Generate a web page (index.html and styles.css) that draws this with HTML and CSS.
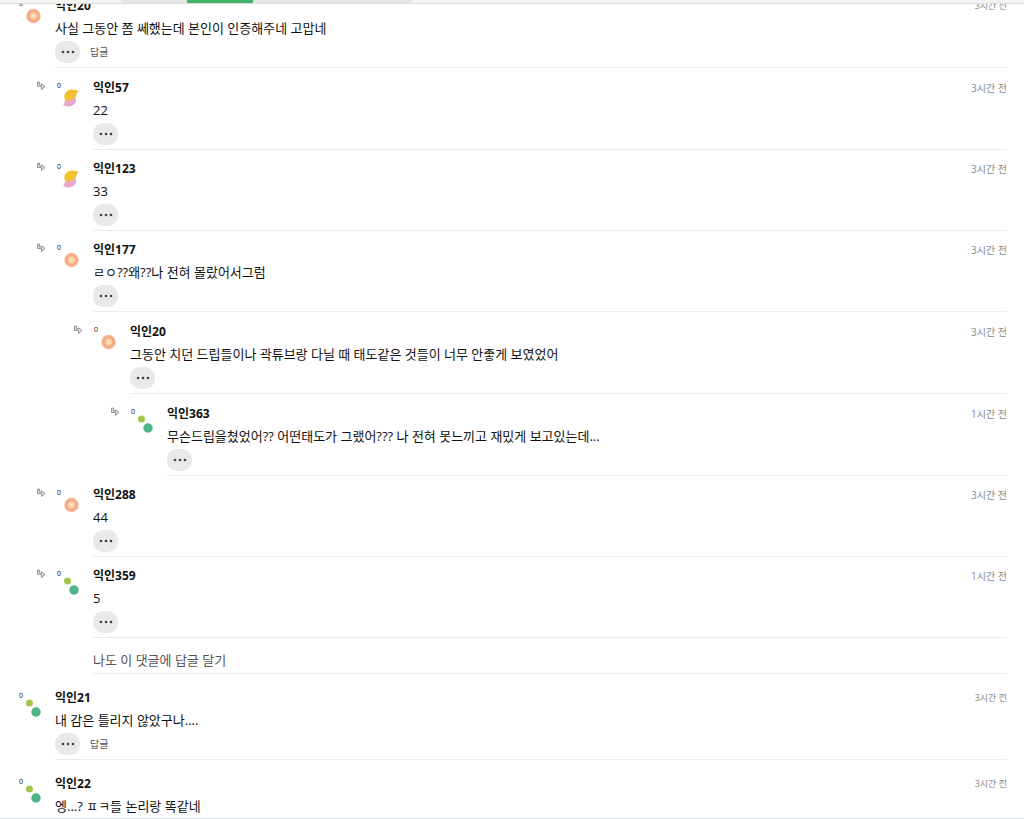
FILE: index.html
```
<!DOCTYPE html>
<html lang="ko">
<head>
    <meta charset="UTF-8">
    <meta name="viewport" content="width=device-width, initial-scale=1.0">
    <title>댓글</title>
    <link rel="stylesheet" href="styles.css">
</head>
<body>

    <!-- Shared icons -->
    <svg class="sprite" aria-hidden="true">
        <defs>
            <radialGradient id="ringFill">
                <stop offset="0" stop-color="#fde3bd"/>
                <stop offset="0.4" stop-color="#fbd0a8"/>
                <stop offset="0.65" stop-color="#f3a47c"/>
                <stop offset="1" stop-color="#f8bc9a"/>
            </radialGradient>
        </defs>
        <symbol id="ring" viewBox="0 0 20 24">
            <circle cx="12.500" cy="13" r="7.200" fill="url(#ringFill)"/>
        </symbol>
        <symbol id="swirl" viewBox="0 0 20 24">
            <path d="M4 19.500C6.500 18 6 11.500 12 11.500C16 11.500 18.500 14 16.500 17.500C14 22 7.500 22.500 4 19.500Z" fill="#eba6cc"/>
            <path d="M5.500 13C4.500 7.500 9 4.500 13 4.500C15.500 4.300 17 5.500 19.500 5.500C18.500 7.500 17.500 8.500 17 11C16 15 12 13.500 9.500 15.500C7.500 16.500 6 15.500 5.500 13Z" fill="#f3c02f"/>
        </symbol>
        <symbol id="dots" viewBox="0 0 20 24">
            <circle cx="8.500" cy="8" r="3.500" fill="#a3c64d"/>
            <circle cx="15" cy="17" r="4.700" fill="#4db583"/>
        </symbol>
        <symbol id="arrow" viewBox="0 0 10 10">
            <path d="M1.500 1V5.500H5.500V8.500L9 5.500L5.500 2.800V4H3.500V1Z" fill="#ddd" stroke="#8c8c8c" stroke-width="0.900"/>
        </symbol>
        <symbol id="more" viewBox="0 0 16 4">
            <circle cx="3" cy="2" r="1.300"/>
            <circle cx="8" cy="2" r="1.300"/>
            <circle cx="13" cy="2" r="1.300"/>
        </symbol>
    </svg>

    <!-- Tab bar -->
    <header class="tabs">
        <span class="tab"></span>
        <span class="tab active"></span>
        <span class="tab wide"></span>
    </header>

    <main class="board">
        <ul class="comments">
            <li>
                <article class="comment top">
                    <div class="avatar"><span>0</span><svg><use href="#ring"/></svg></div>
                    <div class="content">
                        <div class="head"><b>익인20</b><time>3시간 전</time></div>
                        <p>사실 그동안 쫌 쎄했는데 본인이 인증해주네 고맙네</p>
                        <div class="actions">
                            <button class="more" aria-label="더보기"><svg><use href="#more"/></svg></button>
                            <a href="#">답글</a>
                        </div>
                    </div>
                </article>
                <ul class="replies">
                    <li>
                        <article class="comment">
                            <svg class="arrow"><use href="#arrow"/></svg>
                            <div class="avatar"><span>0</span><svg><use href="#swirl"/></svg></div>
                            <div class="content">
                                <div class="head"><b>익인57</b><time>3시간 전</time></div>
                                <p>22</p>
                                <div class="actions"><button class="more" aria-label="더보기"><svg><use href="#more"/></svg></button></div>
                            </div>
                        </article>
                    </li>
                    <li>
                        <article class="comment">
                            <svg class="arrow"><use href="#arrow"/></svg>
                            <div class="avatar"><span>0</span><svg><use href="#swirl"/></svg></div>
                            <div class="content">
                                <div class="head"><b>익인123</b><time>3시간 전</time></div>
                                <p>33</p>
                                <div class="actions"><button class="more" aria-label="더보기"><svg><use href="#more"/></svg></button></div>
                            </div>
                        </article>
                    </li>
                    <li>
                        <article class="comment">
                            <svg class="arrow"><use href="#arrow"/></svg>
                            <div class="avatar"><span>0</span><svg><use href="#ring"/></svg></div>
                            <div class="content">
                                <div class="head"><b>익인177</b><time>3시간 전</time></div>
                                <p>ㄹㅇ??왜??나 전혀 몰랐어서그럼</p>
                                <div class="actions"><button class="more" aria-label="더보기"><svg><use href="#more"/></svg></button></div>
                            </div>
                        </article>
                        <ul class="replies">
                            <li>
                                <article class="comment">
                                    <svg class="arrow"><use href="#arrow"/></svg>
                                    <div class="avatar"><span>0</span><svg><use href="#ring"/></svg></div>
                                    <div class="content">
                                        <div class="head"><b>익인20</b><time>3시간 전</time></div>
                                        <p>그동안 치던 드립들이나 곽튜브랑 다닐 때 태도같은 것들이 너무 안좋게 보였었어</p>
                                        <div class="actions"><button class="more" aria-label="더보기"><svg><use href="#more"/></svg></button></div>
                                    </div>
                                </article>
                                <ul class="replies">
                                    <li>
                                        <article class="comment">
                                            <svg class="arrow"><use href="#arrow"/></svg>
                                            <div class="avatar"><span>0</span><svg><use href="#dots"/></svg></div>
                                            <div class="content">
                                                <div class="head"><b>익인363</b><time>1시간 전</time></div>
                                                <p>무슨드립을쳤었어?? 어떤태도가 그랬어??? 나 전혀 못느끼고 재밌게 보고있는데...</p>
                                                <div class="actions"><button class="more" aria-label="더보기"><svg><use href="#more"/></svg></button></div>
                                            </div>
                                        </article>
                                    </li>
                                </ul>
                            </li>
                        </ul>
                    </li>
                    <li>
                        <article class="comment">
                            <svg class="arrow"><use href="#arrow"/></svg>
                            <div class="avatar"><span>0</span><svg><use href="#ring"/></svg></div>
                            <div class="content">
                                <div class="head"><b>익인288</b><time>3시간 전</time></div>
                                <p>44</p>
                                <div class="actions"><button class="more" aria-label="더보기"><svg><use href="#more"/></svg></button></div>
                            </div>
                        </article>
                    </li>
                    <li>
                        <article class="comment">
                            <svg class="arrow"><use href="#arrow"/></svg>
                            <div class="avatar"><span>0</span><svg><use href="#dots"/></svg></div>
                            <div class="content">
                                <div class="head"><b>익인359</b><time>1시간 전</time></div>
                                <p>5</p>
                                <div class="actions"><button class="more" aria-label="더보기"><svg><use href="#more"/></svg></button></div>
                            </div>
                        </article>
                    </li>
                    <li class="write"><a href="#">나도 이 댓글에 답글 달기</a></li>
                </ul>
            </li>
            <li>
                <article class="comment top">
                    <div class="avatar"><span>0</span><svg><use href="#dots"/></svg></div>
                    <div class="content">
                        <div class="head"><b>익인21</b><time>3시간 전</time></div>
                        <p>내 감은 틀리지 않았구나....</p>
                        <div class="actions">
                            <button class="more" aria-label="더보기"><svg><use href="#more"/></svg></button>
                            <a href="#">답글</a>
                        </div>
                    </div>
                </article>
            </li>
            <li>
                <article class="comment top">
                    <div class="avatar"><span>0</span><svg><use href="#dots"/></svg></div>
                    <div class="content">
                        <div class="head"><b>익인22</b><time>3시간 전</time></div>
                        <p>엥...? ㅍㅋ들 논리랑 똑같네</p>
                    </div>
                </article>
            </li>
        </ul>
    </main>

</body>
</html>
```
FILE: styles.css
```
* {
    margin: 0;
    padding: 0;
    box-sizing: border-box;
}
body {
    display: flex;
    flex-direction: column;
    height: 100vh;
    overflow: hidden;
    background: #fff;
    color: #111;
    font-family: "Open Sans", "Noto Sans CJK KR", sans-serif;
    font-size: 13px;
}
ul {
    list-style: none;
}
a {
    color: #555;
    text-decoration: none;
}
a:hover {
    text-decoration: underline;
}
.sprite {
    position: absolute;
    width: 0;
    height: 0;
}

/* Tab bar */
.tabs {
    display: flex;
    flex-shrink: 0;
    height: 4px;
    padding-left: 121px;
    background: #f4f4f4;
    border-bottom: 1px solid #dcdcdc;
}
.tab {
    width: 66px;
    height: 3px;
    background: #e6e6e6;
}
.tab.active {
    background: #3fb56c;
}
.tab.wide {
    width: 159px;
}

/* Comment list, scrolled part way */
.board {
    flex: 1;
    overflow: hidden;
    border-bottom: 1px solid #d5e0e8;
}
.comments {
    margin-top: -22px;
    padding: 0 17px;
}
.replies {
    padding-top: 1px;
    padding-left: 38px;
}
.replies .replies {
    padding-left: 37px;
}

/* Single comment */
.comment {
    display: flex;
    position: relative;
}
.avatar {
    display: flex;
    flex-shrink: 0;
    width: 38px;
    padding-top: 13px;
}
.avatar span {
    width: 4px;
    margin-left: 2px;
    font-size: 7px;
    line-height: 8px;
}
.avatar svg {
    width: 20px;
    height: 24px;
    margin-top: 3px;
    margin-left: -2px;
}
.arrow {
    position: absolute;
    top: 12px;
    left: -19px;
    width: 10px;
    height: 10px;
}
.content {
    flex: 1;
    padding: 9px 0 4px;
    border-bottom: 1px solid #ececec;
}
.head {
    display: flex;
    justify-content: space-between;
    line-height: 20px;
}
.head b {
    font-size: 12px;
}
.head time {
    color: #888;
    font-size: 10px;
}
.content p {
    margin-bottom: 1px;
    line-height: 24px;
}
.actions {
    display: flex;
    align-items: center;
    gap: 10px;
}
.actions a {
    font-size: 10px;
    line-height: 20px;
}
.more {
    display: flex;
    align-items: center;
    justify-content: center;
    width: 25px;
    height: 22px;
    border: none;
    border-radius: 10px;
    background: #e9e9e9;
    cursor: pointer;
}
.more:hover {
    background: #ddd;
}
.more svg {
    width: 16px;
    height: 4px;
    fill: #444;
}

/* Top level comments */
.top .avatar {
    padding-top: 18px;
}
.top .content {
    padding-top: 14px;
}
.top time {
    font-size: 9px;
}

/* Reply link */
.write {
    margin-left: 38px;
    padding: 10px 0 1px;
    line-height: 24px;
    border-bottom: 1px solid #ececec;
}
```
